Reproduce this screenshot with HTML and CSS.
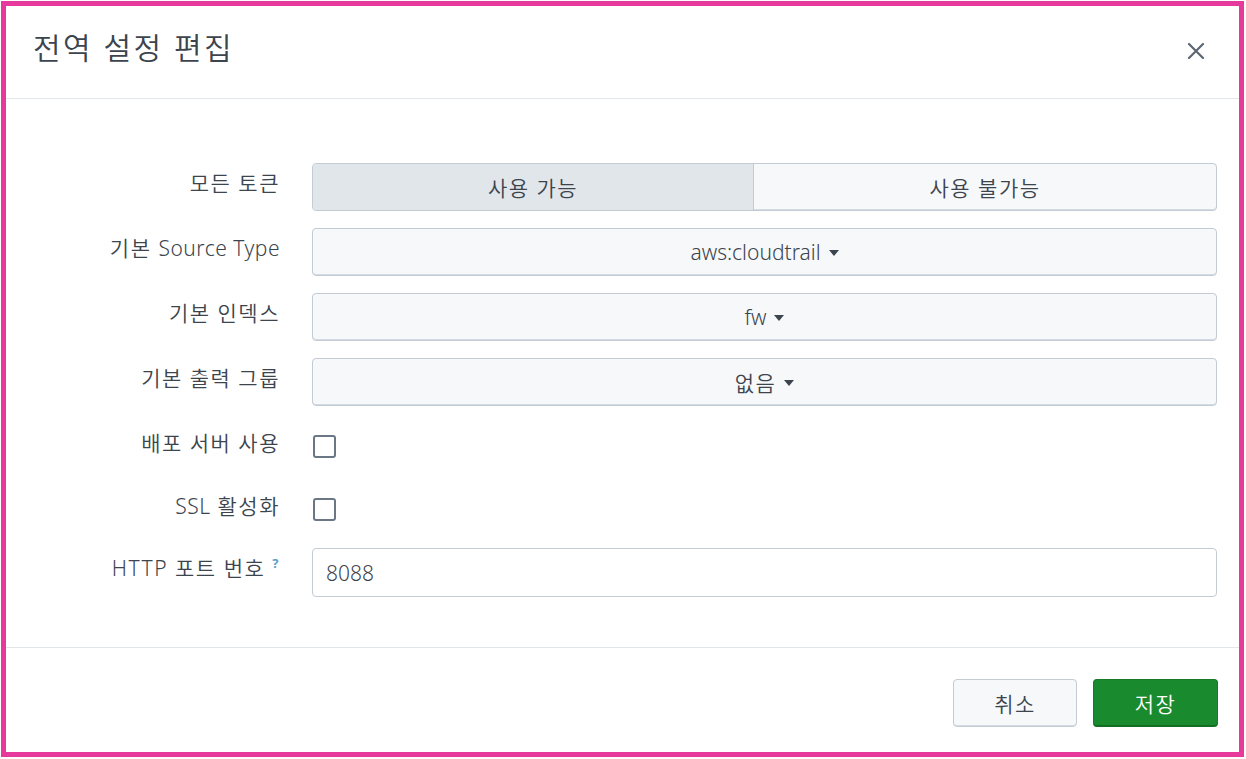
FILE: index.html
```html
<!DOCTYPE html>
<html lang="ko">
<head>
<meta charset="utf-8">
<title>전역 설정 편집</title>
<link rel="stylesheet" href="styles.css">
</head>
<body>
<div class="frame">
  <div class="dialog">
    <header class="head">
      <h1 class="title">전역 설정 편집</h1>
      <button class="close" aria-label="닫기">
        <svg width="18" height="18" viewBox="0 0 18 18"><path d="M2 2 L16 16 M16 2 L2 16" stroke="#5c6773" stroke-width="2.2" stroke-linecap="round"/></svg>
      </button>
    </header>
    <main class="body">
      <div class="row">
        <div class="label">모든 토큰</div>
        <div class="control toggle">
          <div class="seg seg-on">사용 가능</div>
          <div class="seg">사용 불가능</div>
        </div>
      </div>
      <div class="row">
        <div class="label">기본 <span class="lat">Source Type</span></div>
        <div class="control select"><span class="lat">aws:cloudtrail</span><span class="caret"></span></div>
      </div>
      <div class="row">
        <div class="label">기본 인덱스</div>
        <div class="control select"><span class="lat">fw</span><span class="caret"></span></div>
      </div>
      <div class="row">
        <div class="label">기본 출력 그룹</div>
        <div class="control select">없음<span class="caret"></span></div>
      </div>
      <div class="row row-check">
        <div class="label">배포 서버 사용</div>
        <div class="checkbox"></div>
      </div>
      <div class="row row-check2">
        <div class="label"><span class="lat">SSL</span> 활성화</div>
        <div class="checkbox"></div>
      </div>
      <div class="row row-last">
        <div class="label"><span class="lat lat-wide">HTTP</span> 포트 번호<sup class="help">?</sup></div>
        <div class="control input"><span class="lat">8088</span></div>
      </div>
    </main>
    <footer class="foot">
      <button class="btn btn-cancel">취소</button>
      <button class="btn btn-save">저장</button>
    </footer>
  </div>
</div>
</body>
</html>
```

FILE: styles.css
```css
* { box-sizing: border-box; }
html, body { margin: 0; padding: 0; background: #fff; }
body {
  font-family: "Noto Sans", "Noto Sans CJK KR", sans-serif;
  font-weight: 350;
  color: #3c444d;
}
.lat {
  font-family: "Noto Sans", sans-serif;
  font-weight: 350;
  font-size: 21px;
  letter-spacing: 0;
}
.label .lat {
  letter-spacing: 0.5px;
}
.label .lat-wide {
  letter-spacing: 1.5px;
}
.frame {
  margin: 1px 0 0 1px;
  width: 1243px;
  height: 756px;
  border: 5px solid #e6399b;
  background: #fff;
}
.dialog {
  display: flex;
  flex-direction: column;
  height: 100%;
}
.head {
  height: 93px;
  border-bottom: 1px solid #e1e6eb;
  display: flex;
  align-items: center;
  justify-content: space-between;
  padding: 0 34px 0 27px;
}
.title {
  margin: 0 0 12px 0;
  font-size: 30px;
  font-weight: 350;
  color: #3c444d;
  letter-spacing: 2.5px;
}
.close {
  border: 0;
  background: none;
  padding: 0;
  margin-top: -2px;
  width: 18px;
  height: 18px;
  display: flex;
}
.body {
  flex: 1;
  padding: 64px 21px 0 0;
  display: flex;
  flex-direction: column;
  gap: 17px;
}
.row {
  display: flex;
  align-items: flex-start;
  gap: 32px;
  height: 48px;
  flex: none;
}
.row-check { height: 46px; }
.row-check2 { height: 45px; }
.row-last { height: 49px; }
.label {
  width: 274px;
  flex: none;
  text-align: right;
  font-size: 21px;
  letter-spacing: 1.5px;
  line-height: 24px;
  padding-top: 8px;
  color: #3c444d;
  white-space: nowrap;
}
.help {
  color: #5a9fcb;
  font-family: "Noto Sans", sans-serif;
  font-size: 13px;
  font-weight: 700;
  margin-left: 7px;
  vertical-align: 8px;
  line-height: 0;
}
.control {
  width: 905px;
  height: 100%;
  border: 1px solid #c3cbd4;
  border-radius: 4px;
  background: #f7f8fa;
  font-size: 21px;
  letter-spacing: 1.5px;
  color: #3c444d;
}
.toggle {
  display: flex;
  overflow: hidden;
  box-shadow: inset 0 -1px 0 #d4dae1;
}
.seg {
  flex: 1;
  display: flex;
  align-items: center;
  justify-content: center;
}
.seg-on {
  flex: none;
  width: 441px;
  background: #e1e6eb;
  border-right: 1px solid #c3cbd4;
}
.select {
  display: flex;
  align-items: center;
  justify-content: center;
  gap: 8px;
  box-shadow: inset 0 -1px 0 #d4dae1;
}
.caret {
  width: 0;
  height: 0;
  border-left: 5px solid transparent;
  border-right: 5px solid transparent;
  border-top: 6px solid #3c444d;
  margin-top: 1px;
}
.input {
  background: #fff;
  display: flex;
  align-items: center;
  padding-left: 13px;
}
.checkbox {
  width: 23px;
  height: 23px;
  margin: 12px 0 0 1px;
  border: 2px solid #6b7785;
  border-radius: 3px;
  background: #fff;
}
.foot {
  height: 105px;
  border-top: 1px solid #e1e6eb;
  display: flex;
  justify-content: flex-end;
  align-items: flex-start;
  gap: 16px;
  padding: 31px 21px 0 0;
}
.btn {
  width: 124px;
  height: 48px;
  border-radius: 4px;
  font-family: "Noto Sans", "Noto Sans CJK KR", sans-serif;
  font-weight: 350;
  font-size: 21px;
  letter-spacing: 1.5px;
  cursor: pointer;
}
.btn-cancel {
  background: #f7f8fa;
  border: 1px solid #c3cbd4;
  color: #3c444d;
  box-shadow: inset 0 -1px 0 #d4dae1;
}
.btn-save {
  width: 125px;
  background: #1a8a2e;
  border: 1px solid #167a28;
  border-bottom: 2px solid #136d23;
  color: #fff;
}
```
